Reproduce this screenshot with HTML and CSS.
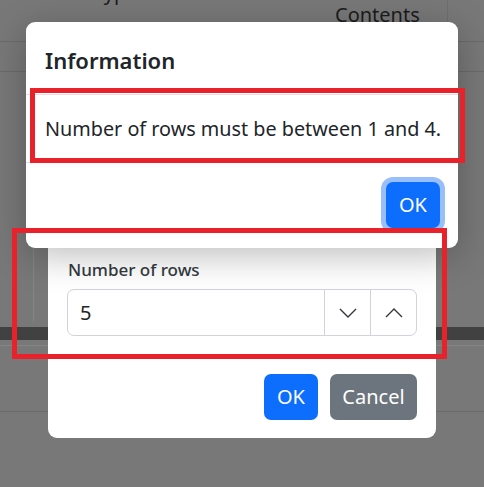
FILE: index.html
```html
<!DOCTYPE html>
<html lang="en">
<head>
<meta charset="utf-8">
<title>Information</title>
<link rel="stylesheet" href="styles.css">
</head>
<body>
<div class="page">
  <div class="thead">
    <div class="th th-type"><span class="type-label">Type</span></div>
    <div class="th th-contents">Contents</div>
    <div class="th th-rest"></div>
  </div>
  <div class="trow"><div class="trow-cell"></div><div class="trow-cell trow-last"></div></div>
  <div class="gap-a"></div>
  <div class="side-line"></div>
  <div class="gap-b"></div>
  <div class="dark-band"></div>
  <div class="gap-c"></div>
  <div class="light-line"></div>
  <div class="gap-d"></div>
  <div class="low-line"></div>
</div>

<div class="modal modal-rows">
  <div class="modal-body rows-body">
    <label class="form-label" for="rows">Number of rows</label>
    <div class="spin">
      <input id="rows" class="spin-input" type="text" value="5">
      <button class="spin-btn" type="button" aria-label="Decrease">
        <svg width="18" height="10" viewBox="0 0 18 10"><polyline points="1,1 9,9 17,1" fill="none" stroke="#343a40" stroke-width="1.4"/></svg>
      </button>
      <button class="spin-btn" type="button" aria-label="Increase">
        <svg width="18" height="10" viewBox="0 0 18 10"><polyline points="1,9 9,1 17,9" fill="none" stroke="#343a40" stroke-width="1.4"/></svg>
      </button>
    </div>
  </div>
  <div class="modal-footer rows-footer">
    <button class="btn btn-primary" type="button">OK</button>
    <button class="btn btn-secondary" type="button">Cancel</button>
  </div>
</div>

<div class="modal modal-info">
  <div class="modal-header">
    <h5 class="modal-title">Information</h5>
  </div>
  <div class="modal-body info-body">Number of rows must be between 1 and 4.</div>
  <div class="modal-footer info-footer">
    <button class="btn btn-primary btn-focus" type="button">OK</button>
  </div>
</div>

<div class="mark mark-one"></div>
<div class="mark mark-two"></div>
</body>
</html>
```

FILE: styles.css
```css
* { box-sizing: border-box; }

html, body {
  margin: 0;
  padding: 0;
  width: 484px;
  height: 487px;
  overflow: hidden;
  font-family: "Noto Sans", "Open Sans", sans-serif;
  color: #212529;
}

.page {
  height: 487px;
  display: flex;
  flex-direction: column;
  background: #787878;
}

.thead {
  height: 42px;
  border-bottom: 1px solid #6a6a6a;
  display: grid;
  grid-template-columns: 335px 112px 1fr;
}

.th { font-size: 20px; line-height: 28px; color: #1c1c1c; }

.th-type { padding-left: 93px; }
.type-label { display: block; margin-top: -21px; }

.th-contents { padding-top: 1px; }

.th-rest { border-left: 1px solid #6e6e6e; }

.trow {
  height: 30px;
  border-bottom: 1px solid #6a6a6a;
  display: grid;
  grid-template-columns: 447px 1fr;
}
.trow-last { border-left: 1px solid #6e6e6e; }

.gap-a { height: 175px; }
.side-line {
  height: 74px;
  margin-left: 33px;
  width: 15px;
  border-left: 1px solid #858585;
}
.gap-b { height: 6px; }
.dark-band { height: 13px; background: #414141; }
.gap-c { height: 5px; }
.light-line { height: 1px; background: #858585; }
.gap-d { height: 65px; }
.low-line { height: 1px; background: #6a6a6a; }

/* Modals */
.modal {
  position: absolute;
  background: #fff;
  border-radius: 9px;
  display: flex;
  flex-direction: column;
}

.modal-info {
  left: 26px;
  top: 22px;
  width: 432px;
  height: 226px;
  box-shadow: 0 8px 36px rgba(0, 0, 0, 0.26);
}

.modal-header {
  height: 73px;
  padding: 0 19px;
  display: flex;
  align-items: center;
  border-bottom: 1px solid #dee2e6;
}

.modal-title {
  margin: 0;
  padding-top: 3px;
  font-size: 22px;
  font-weight: 600;
  line-height: 32px;
  color: #212529;
}

.info-body {
  height: 67px;
  padding: 0 0 0 19px;
  display: flex;
  align-items: center;
  white-space: nowrap;
  font-size: 19.8px;
  line-height: 28px;
}

.modal-footer {
  display: flex;
  justify-content: flex-end;
  border-top: 1px solid #dee2e6;
}

.info-footer {
  flex: 1;
  padding: 19px 18px 0 0;
}

.btn {
  height: 46px;
  border: 0;
  border-radius: 7px;
  font-family: inherit;
  font-size: 20px;
  line-height: 46px;
  color: #fff;
  padding: 0 14px;
}

.btn-primary { background: #0d6efd; width: 54px; padding: 0; }
.btn-secondary { background: #6c757d; width: 87px; padding: 0; }

.btn-focus { box-shadow: 0 0 0 5px #98bffb; }

.modal-rows {
  left: 48px;
  top: 236px;
  width: 388px;
  height: 202px;
}

.rows-body {
  padding: 21px 19px 0 19px;
  height: 119px;
}

.form-label {
  display: block;
  padding-left: 1px;
  font-size: 17px;
  font-weight: 500;
  line-height: 26px;
  color: #343a40;
  margin-bottom: 6px;
}

.spin {
  display: flex;
  height: 47px;
  border: 1px solid #ced4da;
  border-radius: 7px;
  overflow: hidden;
}

.spin-input {
  flex: 1;
  min-width: 0;
  border: 0;
  outline: none;
  background: transparent;
  padding: 0 12px;
  font-family: inherit;
  font-size: 20px;
  color: #212529;
}

.spin-btn {
  width: 46px;
  border: 0;
  border-left: 1px solid #ced4da;
  background: transparent;
  display: flex;
  align-items: center;
  justify-content: center;
  padding: 0;
}

.rows-footer {
  flex: 1;
  padding: 18px 19px 0 0;
  gap: 12px;
  align-items: flex-start;
}

/* Annotation marks */
.mark {
  position: absolute;
  border: 5px solid #e8212a;
}
.mark-one { left: 30px; top: 88px; width: 435px; height: 75px; }
.mark-two { left: 12px; top: 228px; width: 435px; height: 131px; }
```
